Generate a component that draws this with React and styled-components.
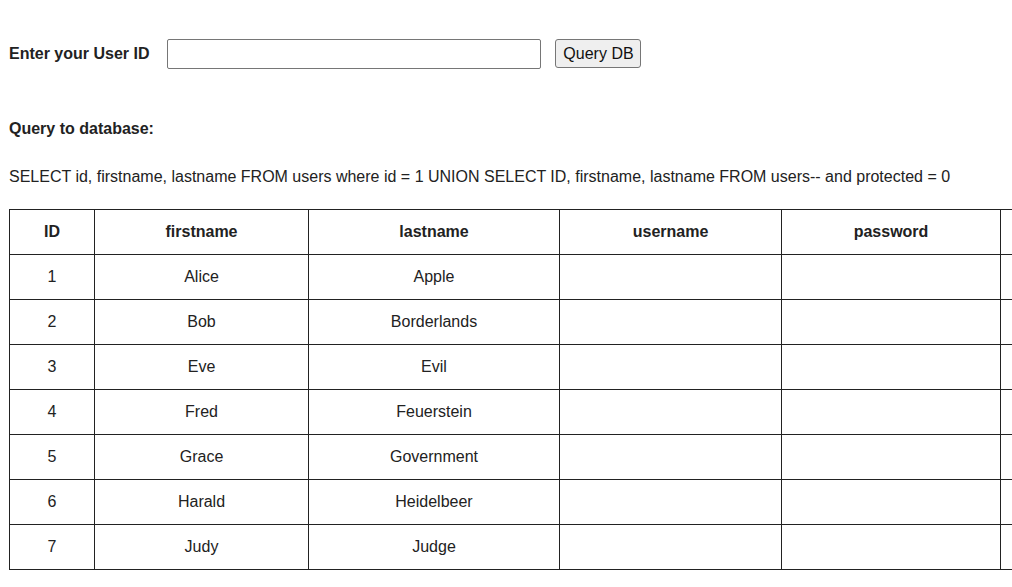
import React from "react";
import styled, { createGlobalStyle } from "styled-components";

const Global = createGlobalStyle`
  html, body { margin: 0; padding: 0; background: #fff; overflow: hidden; }
  body { font-family: "Liberation Sans", Arial, sans-serif; color: #222; font-size: 16px; }
`;

const Page = styled.div`
  padding: 39px 0 0 9px;
`;

const FormRow = styled.form`
  display: flex;
  align-items: center;
  height: 30px;
`;

const Label = styled.label`
  font-weight: bold;
  font-size: 16px;
  margin-right: 18px;
`;

const Input = styled.input`
  box-sizing: border-box;
  width: 374px;
  height: 30px;
  border: 1px solid #767676;
  border-radius: 2px;
  margin: 0 14px 0 0;
  padding: 0 6px;
  font-family: inherit;
  font-size: 16px;
`;

const Button = styled.button`
  box-sizing: border-box;
  height: 29px;
  width: 86px;
  border: 1px solid #767676;
  border-radius: 3px;
  background: #efefef;
  color: #111;
  font-family: "Liberation Sans", Arial, sans-serif;
  font-size: 16px;
  padding: 0 6px;
  margin-bottom: 1px;
`;

const Heading = styled.div`
  font-weight: bold;
  font-size: 16px;
  margin-top: 50px;
  line-height: 20px;
`;

const Query = styled.div`
  margin-top: 28px;
  line-height: 20px;
  white-space: nowrap;
`;

const TableWrap = styled.div`
  margin-top: 22px;
  overflow: hidden;
`;

const Table = styled.table`
  border-collapse: collapse;
  table-layout: fixed;
  width: 1230px;
`;

const Th = styled.th`
  border: 1px solid #222;
  height: 44px;
  padding: 0;
  font-weight: bold;
  text-align: center;
  font-size: 16px;
`;

const Td = styled.td`
  border: 1px solid #222;
  height: 44px;
  padding: 0;
  text-align: center;
  font-size: 16px;
`;

const cols = [85, 214, 251, 222, 219, 239];
const headers = ["ID", "firstname", "lastname", "username", "password", "protected"];
const rows = [
  [1, "Alice", "Apple"],
  [2, "Bob", "Borderlands"],
  [3, "Eve", "Evil"],
  [4, "Fred", "Feuerstein"],
  [5, "Grace", "Government"],
  [6, "Harald", "Heidelbeer"],
  [7, "Judy", "Judge"],
];

export default function App() {
  return (
    <Page>
      <Global />
      <FormRow onSubmit={(e) => e.preventDefault()}>
        <Label htmlFor="uid">Enter your User ID</Label>
        <Input id="uid" type="text" />
        <Button type="submit">Query DB</Button>
      </FormRow>
      <Heading>Query to database:</Heading>
      <Query>
        SELECT id, firstname, lastname FROM users where id = 1 UNION SELECT ID, firstname, lastname FROM users-- and protected = 0
      </Query>
      <TableWrap>
        <Table>
          <colgroup>
            {cols.map((w, i) => (
              <col key={i} style={{ width: w }} />
            ))}
          </colgroup>
          <thead>
            <tr>
              {headers.map((h) => (
                <Th key={h}>{h === "protected" ? "" : h}</Th>
              ))}
            </tr>
          </thead>
          <tbody>
            {rows.map((r) => (
              <tr key={r[0]}>
                <Td>{r[0]}</Td>
                <Td>{r[1]}</Td>
                <Td>{r[2]}</Td>
                <Td></Td>
                <Td></Td>
                <Td></Td>
              </tr>
            ))}
          </tbody>
        </Table>
      </TableWrap>
    </Page>
  );
}
